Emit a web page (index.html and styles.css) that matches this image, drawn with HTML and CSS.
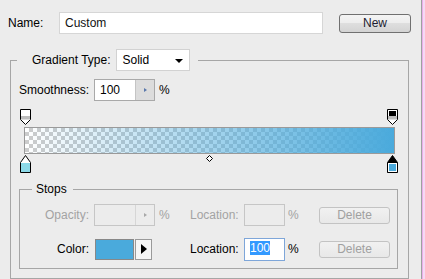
FILE: index.html
```html
<!DOCTYPE html>
<html>
<head>
  <title>Gradient Editor</title>
  <link rel="stylesheet" href="styles.css">
</head>
<body>
  <div class="window">
    <div class="dialog">
      <div class="name-row">
        <span class="name-label">Name:</span>
        <div class="name-field">Custom</div>
        <button class="btn new-btn">New</button>
      </div>

      <fieldset class="group gradient-group">
        <legend class="gradient-title">
          <div class="title-inner">
            <span>Gradient Type:</span>
            <span class="select">Solid<i class="caret"></i></span>
          </div>
        </legend>

        <div class="smooth-row">
          <span class="smooth-label">Smoothness:</span>
          <span class="spin">
            <span class="spin-value">100</span>
            <span class="spin-btn"><i class="tri"></i></span>
          </span>
          <span class="unit">%</span>
        </div>

        <!-- gradient ramp with its stops -->
        <div class="ramp">
          <svg class="stop stop-top stop-start" width="11" height="17" viewBox="0 0 11 17">
            <path d="M0.5 0.5H10.5V10.5L5.5 15.5L0.5 10.5Z" fill="#fff" stroke="#000"/>
            <rect x="1" y="7" width="9" height="3.5" fill="#bdbdbd"/>
          </svg>
          <svg class="stop stop-top stop-end" width="11" height="17" viewBox="0 0 11 17">
            <path d="M0.5 0.5H10.5V10.5L5.5 15.5L0.5 10.5Z" fill="#fff" stroke="#000"/>
            <rect x="2" y="2" width="7" height="5" fill="#000"/>
            <rect x="1" y="7" width="9" height="3.5" fill="#bdbdbd"/>
          </svg>

          <div class="bar"><div class="bar-fill"></div></div>

          <svg class="stop stop-bottom stop-start" width="11" height="18" viewBox="0 0 11 18">
            <path d="M5.5 0.5L10.5 7.5V17.5H0.5V7.5Z" fill="#fff" stroke="#000"/>
            <rect x="1" y="8" width="9" height="9" fill="#8cd9e8"/>
          </svg>
          <svg class="stop stop-bottom stop-end" width="11" height="18" viewBox="0 0 11 18">
            <path d="M5.5 0.5L10.5 7.5V17.5H0.5V7.5Z" fill="#000" stroke="#000"/>
            <rect x="1" y="8" width="9" height="9" fill="#fff"/>
            <rect x="2" y="9" width="7" height="7" fill="#4aaadc"/>
          </svg>
          <svg class="midpoint" width="7" height="7" viewBox="0 0 7 7">
            <path d="M3.5 0.5L6.5 3.5L3.5 6.5L0.5 3.5Z" fill="#fff" stroke="#000"/>
          </svg>
        </div>

        <fieldset class="group stops-group">
          <legend class="stops-title">Stops</legend>
          <div class="stop-grid">
            <span class="cell-label disabled">Opacity:</span>
            <span class="cell"><span class="spin spin-off"><span class="spin-value"></span><span class="spin-btn"><i class="tri"></i></span></span></span>
            <span class="cell disabled">%</span>
            <span class="cell disabled">Location:</span>
            <span class="cell"><span class="field field-off"></span></span>
            <span class="cell disabled">%</span>
            <span class="cell"><button class="btn btn-off">Delete</button></span>

            <span class="cell-label">Color:</span>
            <span class="cell">
              <span class="swatch"></span>
              <span class="swatch-btn"><i class="play"></i></span>
            </span>
            <span class="cell"></span>
            <span class="cell">Location:</span>
            <span class="cell"><span class="field field-on"><span class="selected">100</span></span></span>
            <span class="cell">%</span>
            <span class="cell"><button class="btn btn-off">Delete</button></span>
          </div>
        </fieldset>
      </fieldset>
    </div>
    <div class="edge"></div>
  </div>
</body>
</html>
```

FILE: styles.css
```css
* {
  box-sizing: border-box;
}
body {
  margin: 0;
  background-color: #ececec;
  font-family: "Liberation Sans", Arial, sans-serif;
  font-size: 12px;
  color: #000;
}

.window {
  display: flex;
  height: 279px;
  overflow: hidden;
}
.dialog {
  width: 421px;
  padding-top: 12px;
}
.edge {
  width: 4px;
  border-left: 1px solid #a0a0a0;
  background: linear-gradient(to right, #e9aee9 1px, #f7d8f3 1px);
}

/* name row */
.name-row {
  display: flex;
  align-items: center;
  height: 22px;
  padding-left: 8px;
}
.name-label {
  width: 51px;
}
.name-field {
  width: 264px;
  height: 22px;
  line-height: 20px;
  padding-left: 5px;
  background-color: #fff;
  border: 1px solid #d6d6d6;
  color: #111;
}
.btn {
  font-family: inherit;
  font-size: 12px;
  padding: 0;
  border-radius: 3px;
}
.new-btn {
  margin-left: 16px;
  width: 72px;
  height: 19px;
  border: 1px solid #707070;
  background: linear-gradient(#f4f4f4, #ececec 50%, #dedede 50%, #d3d3d3);
  color: #1c1c30;
}

/* group boxes */
.group {
  margin: 0;
  border: 1px solid #a6a6a6;
}
.gradient-group {
  margin: 15px 0 0 10px;
  width: 399px;
  padding: 8px 8px 9px 8px;
}
.gradient-title {
  margin-left: -2px;
  padding: 0 8px 0 15px;
}
.title-inner {
  display: flex;
  align-items: center;
  height: 22px;
}
.select {
  position: relative;
  display: block;
  width: 74px;
  height: 22px;
  margin-left: 5px;
  padding-left: 6px;
  line-height: 20px;
  background-color: #fff;
  border: 1px solid #d2d2d2;
}
.caret {
  position: absolute;
  right: 6px;
  top: 9px;
  border-left: 4px solid transparent;
  border-right: 4px solid transparent;
  border-top: 4px solid #000;
}

/* smoothness */
.smooth-row {
  display: flex;
  align-items: center;
  height: 22px;
}
.smooth-label {
  width: 75px;
}
.spin {
  display: flex;
  width: 61px;
  height: 22px;
  border: 1px solid #a9a9a9;
}
.spin-value {
  width: 40px;
  padding-left: 5px;
  line-height: 20px;
  background-color: #fff;
}
.spin-btn {
  flex: 1;
  display: flex;
  align-items: center;
  justify-content: center;
  background-color: #dcdcdc;
  border-left: 1px solid #c4c4c4;
}
.tri {
  border-top: 2px solid transparent;
  border-bottom: 2px solid transparent;
  border-left: 3px solid #5a78ac;
}
.unit {
  margin-left: 4px;
}

/* ramp */
.ramp {
  position: relative;
  height: 64px;
  margin-top: 8px;
  padding-top: 18px;
}
.bar {
  width: 371px;
  height: 27px;
  margin-left: 5px;
  border: 1px solid #9a9a9a;
  background-color: #fff;
  background-image:
    linear-gradient(45deg, #cccccc 25%, transparent 25%, transparent 75%, #cccccc 75%),
    linear-gradient(45deg, #cccccc 25%, transparent 25%, transparent 75%, #cccccc 75%);
  background-size: 8px 8px;
  background-position: 0 0, 4px 4px;
}
.bar-fill {
  height: 100%;
  background: linear-gradient(to right, rgba(74, 170, 220, 0), rgba(74, 170, 220, 1));
}
.stop {
  position: absolute;
  display: block;
}
.stop-top {
  top: 0;
}
.stop-bottom {
  top: 46px;
}
.stop-start {
  left: 1px;
}
.stop-end {
  left: 368px;
}
.midpoint {
  position: absolute;
  display: block;
  top: 46px;
  left: 187px;
}

/* stops box */
.stops-group {
  width: 379px;
  margin-top: 9px;
  padding: 0 0 8px 0;
}
.stops-title {
  margin-left: 12px;
  padding: 0 6px 0 4px;
  line-height: 14px;
}
.stop-grid {
  display: grid;
  grid-template-columns: 74px 65px 31px 54px 44px 31px 71px;
  grid-auto-rows: 22px;
  row-gap: 12px;
  margin-top: 8px;
  align-items: center;
}
.cell {
  display: flex;
  align-items: center;
}
.cell-label {
  text-align: right;
  padding-right: 5px;
}
.disabled {
  color: #a3a3a3;
}
.spin-off {
  border-color: #c6c6c6;
}
.spin-off .spin-value,
.spin-off .spin-btn {
  background-color: #ececec;
}
.spin-off .spin-btn {
  border-left-color: #d6d6d6;
}
.spin-off .tri {
  border-left-color: #a8a8a8;
}
.field {
  display: block;
  width: 41px;
  height: 22px;
}
.field-off {
  border: 1px solid #c6c6c6;
}
.field-on {
  height: 23px;
  padding-left: 5px;
  line-height: 19px;
  background-color: #fff;
  border: 1px solid #7ea6d9;
}
.selected {
  background-color: #3399ff;
  color: #fff;
}
.btn-off {
  width: 71px;
  height: 17px;
  border: 1px solid #c3c3c3;
  background: linear-gradient(#f1f1f1, #e8e8e8);
  color: #a0a0a0;
}
.swatch {
  width: 39px;
  height: 21px;
  margin-left: 1px;
  background-color: #4aaadc;
  border: 1px solid #888;
}
.swatch-btn {
  display: flex;
  align-items: center;
  justify-content: center;
  width: 17px;
  height: 21px;
  margin-left: 1px;
  background-color: #f6f6f6;
  border: 1px solid #9a9a9a;
}
.play {
  border-top: 5px solid transparent;
  border-bottom: 5px solid transparent;
  border-left: 6px solid #000;
}
```
